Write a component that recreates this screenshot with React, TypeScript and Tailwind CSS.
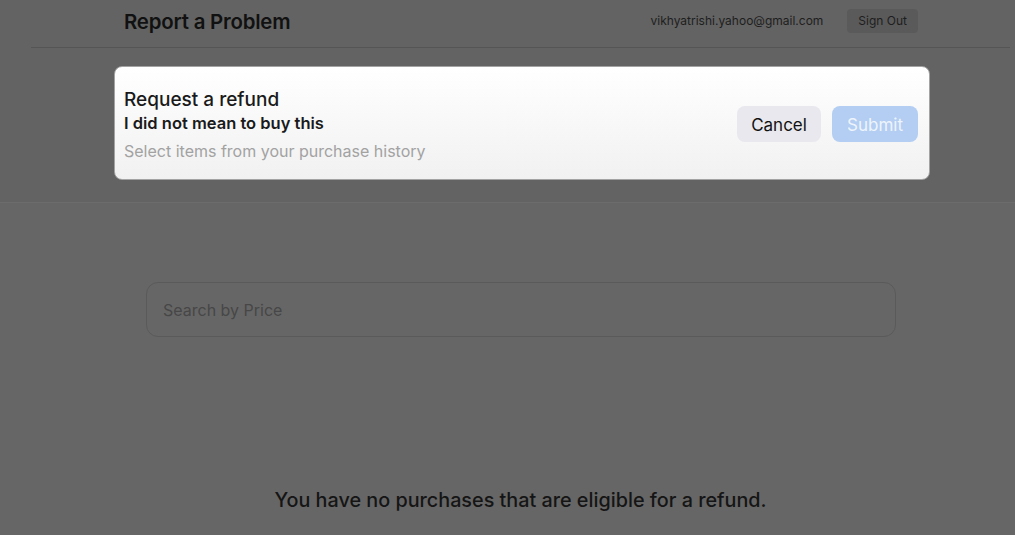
import React from "react";

export default function App() {
  return (
    <div className="w-[1015px] h-[535px] overflow-hidden bg-[#666666] font-['Inter','Noto_Sans',sans-serif] text-[#1a1a1a]">
      <div className="h-[203px] bg-[#636363] border-b border-[#6c6c6c]">
        <div className="ml-[31px] w-[979px] h-[48px] border-b border-[#555555] flex items-center justify-between pl-[93px] pr-[92px]">
          <div className="text-[20.4px] font-semibold tracking-[-0.2px] text-[#111111] leading-none pb-[3px]">Report a Problem</div>
          <div className="flex items-center gap-[24px] pb-[6px]">
            <span className="text-[12px] text-[#1e1e1e]">vikhyatrishi.yahoo@gmail.com</span>
            <span className="h-[24px] px-[11px] flex items-center rounded-[4px] bg-[#5a5a5a] text-[12px] text-[#1e1e1e]">Sign Out</span>
          </div>
        </div>
        <div className="ml-[114px] mt-[18px] w-[816px] h-[114px] rounded-[8px] border border-[#a3a3a3] bg-gradient-to-b from-[#ffffff] to-[#f1f1f1] flex items-center justify-between pl-[9px] pr-[11px]">
          <div className="flex flex-col pt-[4px]">
            <div className="text-[19px] font-medium leading-[24px] text-[#1a1a1a]">Request a refund</div>
            <div className="text-[16.5px] font-semibold leading-[22px] text-[#1a1a1a]">I did not mean to buy this</div>
            <div className="mt-[6px] text-[16px] leading-[22px] text-[#a2a2a2]">Select items from your purchase history</div>
          </div>
          <div className="flex items-center gap-[11px] pt-[2px]">
            <div className="w-[84px] h-[36px] pt-[3px] rounded-[8px] bg-[#e8e8ee] flex items-center justify-center text-[17px] text-[#111111]">Cancel</div>
            <div className="w-[86px] h-[36px] pt-[3px] rounded-[8px] bg-[#b3cef2] flex items-center justify-center text-[17px] text-[#eef4fc]">Submit</div>
          </div>
        </div>
      </div>
      <div className="ml-[146px] mt-[79px] w-[750px] h-[55px] rounded-[12px] border border-[#5a5a5a] flex items-center pl-[16px]">
        <span className="text-[16px] text-[#474747]">Search by Price</span>
      </div>
      <div className="mt-[149px] ml-[31px] w-[979px] text-center text-[19.8px] font-medium text-[#151515]">
        You have no purchases that are eligible for a refund.
      </div>
    </div>
  );
}
